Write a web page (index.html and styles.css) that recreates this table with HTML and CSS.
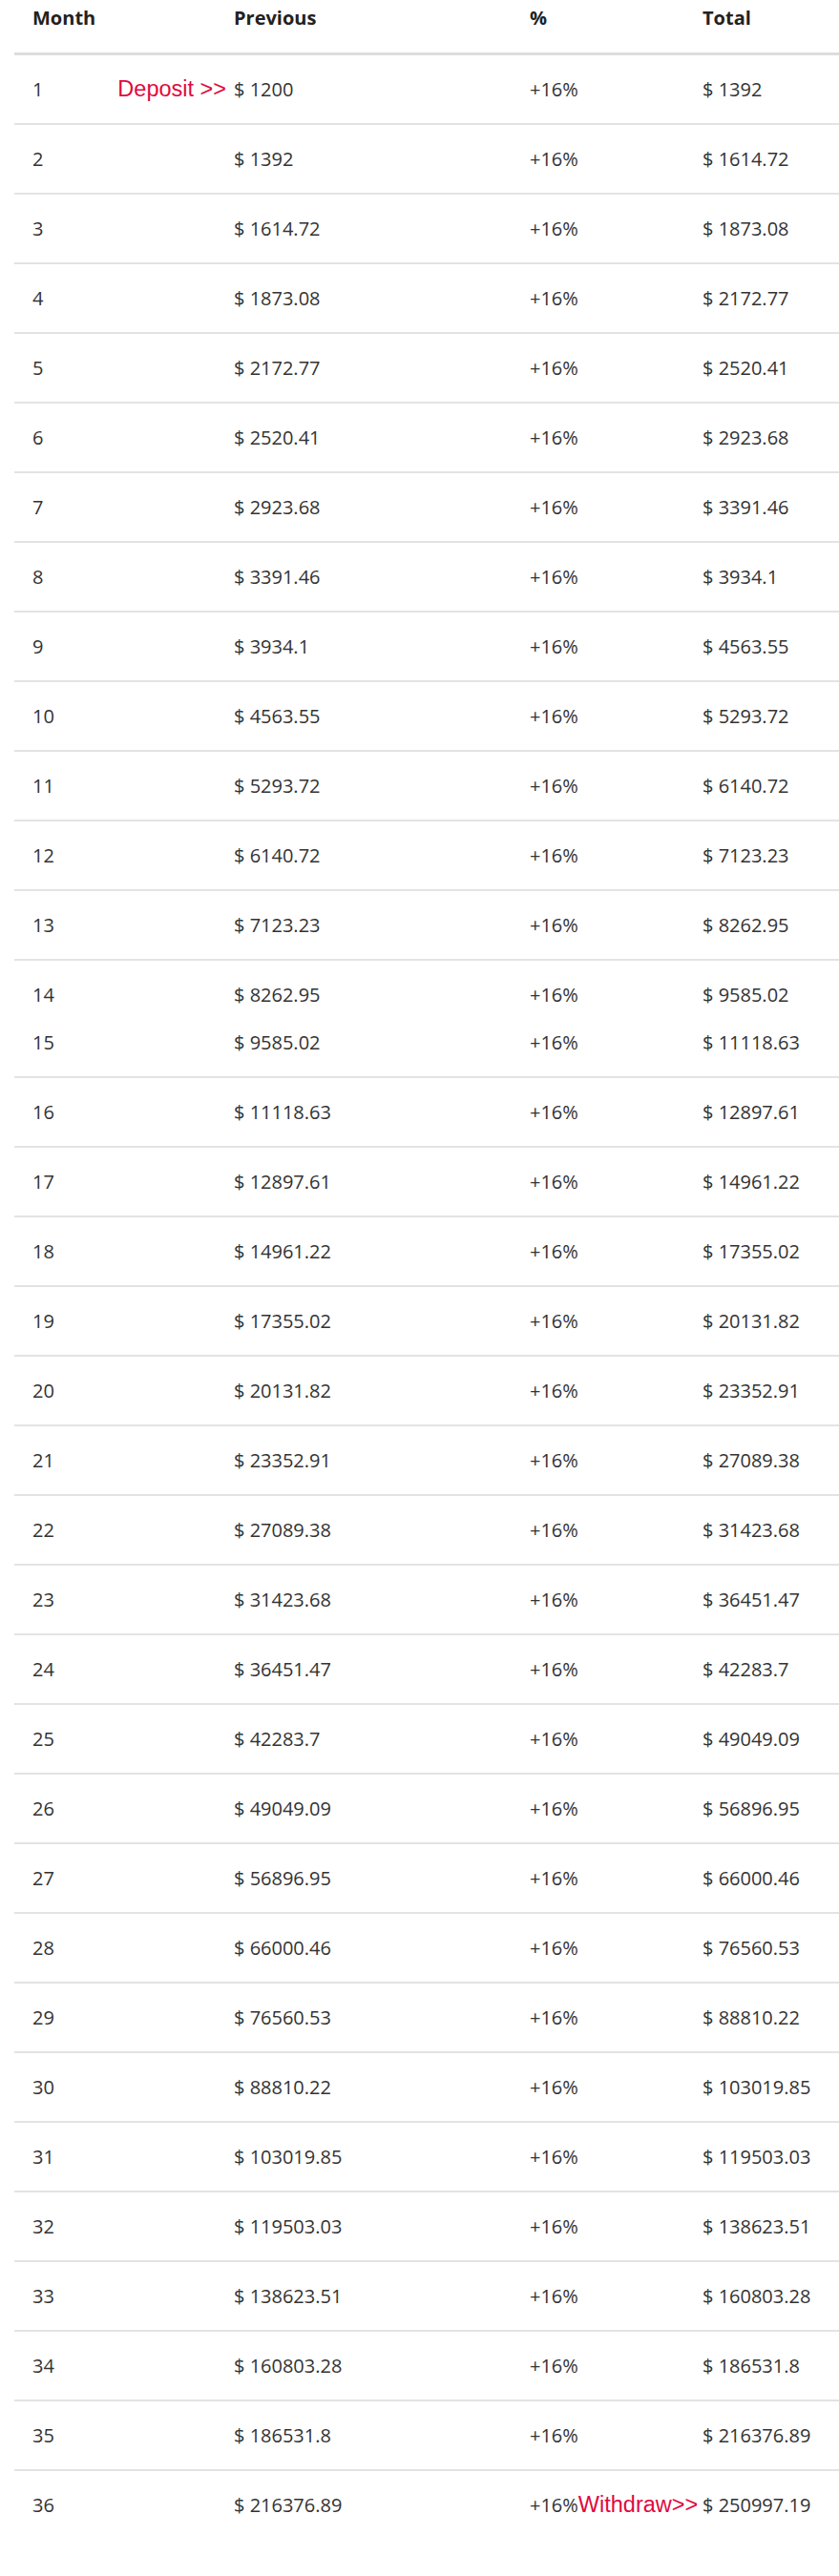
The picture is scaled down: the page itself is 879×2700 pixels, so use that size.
FILE: index.html
```html
<!DOCTYPE html>
<html lang="en">
<head>
<meta charset="utf-8">
<title>Compound table</title>
<link rel="stylesheet" href="styles.css">
</head>
<body>
<table class="calc">
<colgroup><col class="c-month"><col class="c-prev"><col class="c-pct"><col class="c-total"></colgroup>
<thead>
<tr><th class="month">Month</th><th>Previous</th><th class="pct">%</th><th>Total</th></tr>
</thead>
<tbody>
<tr><td class="month"><div class="month-in"><span>1</span><span class="note">Deposit &gt;&gt;</span></div></td><td>$ 1200</td><td class="pct">+16%</td><td>$ 1392</td></tr>
<tr><td class="month">2</td><td>$ 1392</td><td class="pct">+16%</td><td>$ 1614.72</td></tr>
<tr><td class="month">3</td><td>$ 1614.72</td><td class="pct">+16%</td><td>$ 1873.08</td></tr>
<tr><td class="month">4</td><td>$ 1873.08</td><td class="pct">+16%</td><td>$ 2172.77</td></tr>
<tr><td class="month">5</td><td>$ 2172.77</td><td class="pct">+16%</td><td>$ 2520.41</td></tr>
<tr><td class="month">6</td><td>$ 2520.41</td><td class="pct">+16%</td><td>$ 2923.68</td></tr>
<tr><td class="month">7</td><td>$ 2923.68</td><td class="pct">+16%</td><td>$ 3391.46</td></tr>
<tr><td class="month">8</td><td>$ 3391.46</td><td class="pct">+16%</td><td>$ 3934.1</td></tr>
<tr><td class="month">9</td><td>$ 3934.1</td><td class="pct">+16%</td><td>$ 4563.55</td></tr>
<tr><td class="month">10</td><td>$ 4563.55</td><td class="pct">+16%</td><td>$ 5293.72</td></tr>
<tr><td class="month">11</td><td>$ 5293.72</td><td class="pct">+16%</td><td>$ 6140.72</td></tr>
<tr><td class="month">12</td><td>$ 6140.72</td><td class="pct">+16%</td><td>$ 7123.23</td></tr>
<tr><td class="month">13</td><td>$ 7123.23</td><td class="pct">+16%</td><td>$ 8262.95</td></tr>
<tr class="joined"><td class="month">14</td><td>$ 8262.95</td><td class="pct">+16%</td><td>$ 9585.02</td></tr>
<tr class="after-joined"><td class="month">15</td><td>$ 9585.02</td><td class="pct">+16%</td><td>$ 11118.63</td></tr>
<tr><td class="month">16</td><td>$ 11118.63</td><td class="pct">+16%</td><td>$ 12897.61</td></tr>
<tr><td class="month">17</td><td>$ 12897.61</td><td class="pct">+16%</td><td>$ 14961.22</td></tr>
<tr><td class="month">18</td><td>$ 14961.22</td><td class="pct">+16%</td><td>$ 17355.02</td></tr>
<tr><td class="month">19</td><td>$ 17355.02</td><td class="pct">+16%</td><td>$ 20131.82</td></tr>
<tr><td class="month">20</td><td>$ 20131.82</td><td class="pct">+16%</td><td>$ 23352.91</td></tr>
<tr><td class="month">21</td><td>$ 23352.91</td><td class="pct">+16%</td><td>$ 27089.38</td></tr>
<tr><td class="month">22</td><td>$ 27089.38</td><td class="pct">+16%</td><td>$ 31423.68</td></tr>
<tr><td class="month">23</td><td>$ 31423.68</td><td class="pct">+16%</td><td>$ 36451.47</td></tr>
<tr><td class="month">24</td><td>$ 36451.47</td><td class="pct">+16%</td><td>$ 42283.7</td></tr>
<tr><td class="month">25</td><td>$ 42283.7</td><td class="pct">+16%</td><td>$ 49049.09</td></tr>
<tr><td class="month">26</td><td>$ 49049.09</td><td class="pct">+16%</td><td>$ 56896.95</td></tr>
<tr><td class="month">27</td><td>$ 56896.95</td><td class="pct">+16%</td><td>$ 66000.46</td></tr>
<tr><td class="month">28</td><td>$ 66000.46</td><td class="pct">+16%</td><td>$ 76560.53</td></tr>
<tr><td class="month">29</td><td>$ 76560.53</td><td class="pct">+16%</td><td>$ 88810.22</td></tr>
<tr><td class="month">30</td><td>$ 88810.22</td><td class="pct">+16%</td><td>$ 103019.85</td></tr>
<tr><td class="month">31</td><td>$ 103019.85</td><td class="pct">+16%</td><td>$ 119503.03</td></tr>
<tr><td class="month">32</td><td>$ 119503.03</td><td class="pct">+16%</td><td>$ 138623.51</td></tr>
<tr><td class="month">33</td><td>$ 138623.51</td><td class="pct">+16%</td><td>$ 160803.28</td></tr>
<tr><td class="month">34</td><td>$ 160803.28</td><td class="pct">+16%</td><td>$ 186531.8</td></tr>
<tr><td class="month">35</td><td>$ 186531.8</td><td class="pct">+16%</td><td>$ 216376.89</td></tr>
<tr class="last"><td class="month">36</td><td>$ 216376.89</td><td class="pct">+16%<span class="note">Withdraw&gt;&gt;</span></td><td>$ 250997.19</td></tr>
</tbody>
</table>
</body>
</html>
```

FILE: styles.css
```css
html, body {
  margin: 0;
  padding: 0;
  background: #ffffff;
}

body {
  font-family: "Open Sans", "Liberation Sans", sans-serif;
  font-size: 20px;
  line-height: 30px;
  color: #333333;
}

.calc {
  margin-left: 15px;
  width: 864px;
  table-layout: fixed;
  border-collapse: collapse;
  border-spacing: 0;
}

.c-month { width: 230px; }
.c-prev { width: 310px; }
.c-pct { width: 181px; }
.c-total { width: 143px; }

.calc th,
.calc td {
  text-align: left;
  vertical-align: top;
  padding: 21px 8px 20px 0;
  white-space: nowrap;
  overflow: visible;
}

.calc th {
  font-weight: 700;
  color: #222222;
  padding-top: 4px;
  padding-bottom: 21px;
  border-bottom: 3px solid #dddddd;
}

.calc td {
  border-bottom: 2px solid #e3e3e3;
}

.calc .month {
  padding-left: 19px;
}

.calc .pct {
  padding-right: 0;
}

.month-in {
  display: flex;
  justify-content: space-between;
  align-items: baseline;
}

.note {
  font-family: "Liberation Sans", Arial, sans-serif;
  font-size: 23.5px;
  line-height: 1;
  color: #e1093d;
}

.calc tr.joined td {
  padding-bottom: 0;
  border-bottom: none;
}

.calc tr.after-joined td {
  padding-top: 20px;
}

.calc tr.last td {
  border-bottom: none;
}
```
